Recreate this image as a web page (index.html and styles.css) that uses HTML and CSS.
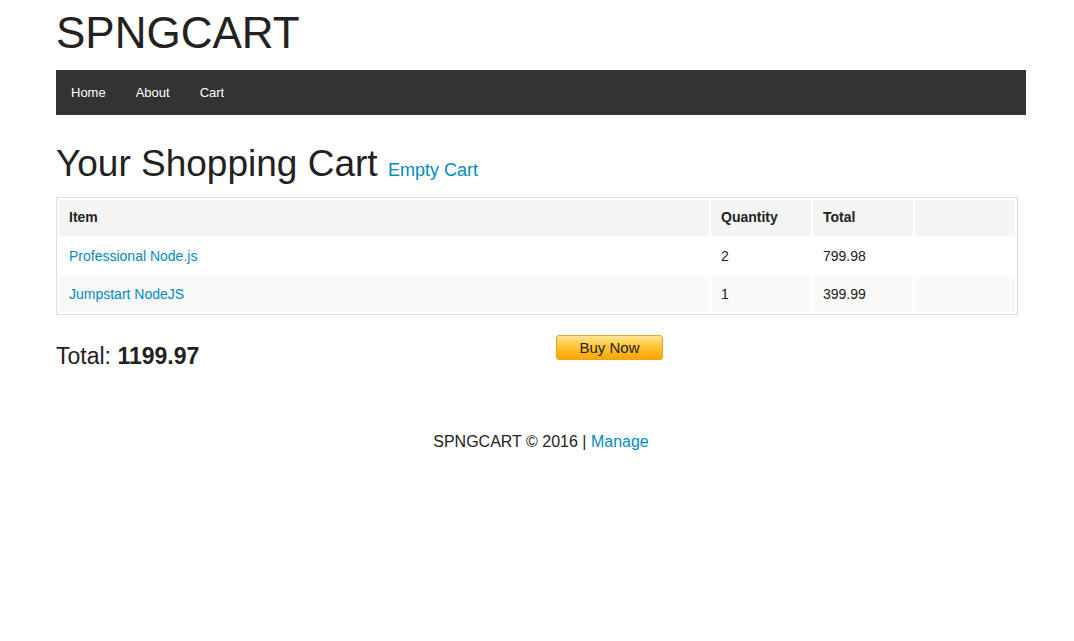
FILE: index.html
```html
<!DOCTYPE html>
<html>
<head>
<meta charset="utf-8">
<title>SPNGCART</title>
<link rel="stylesheet" href="styles.css">
</head>
<body>
<div class="container">
  <h1 class="brand">SPNGCART</h1>
  <nav class="topbar">
    <a href="#">Home</a>
    <a href="#">About</a>
    <a href="#">Cart</a>
  </nav>
  <h2 class="page-title">Your Shopping Cart <a class="empty" href="#">Empty Cart</a></h2>
  <table class="cart">
    <thead>
      <tr><th class="c-item">Item</th><th class="c-num">Quantity</th><th class="c-num">Total</th><th class="c-num"></th></tr>
    </thead>
    <tbody>
      <tr><td><a href="#">Professional Node.js</a></td><td>2</td><td>799.98</td><td></td></tr>
      <tr><td><a href="#">Jumpstart NodeJS</a></td><td>1</td><td>399.99</td><td></td></tr>
    </tbody>
  </table>
  <div class="summary">
    <h4 class="total">Total: <strong>1199.97</strong></h4>
    <div class="buy-col"><button class="buy">Buy Now</button></div>
  </div>
  <footer class="footer">SPNGCART © 2016 | <a href="#">Manage</a></footer>
</div>
</body>
</html>
```
FILE: styles.css
```css
* { box-sizing: border-box; }
html, body { margin: 0; padding: 0; background: #fff; }
body {
  font-family: "Liberation Sans", Arial, Helvetica, sans-serif;
  color: #222;
  font-size: 16px;
}
a { color: #008cba; text-decoration: none; }
.container { width: 970px; margin-left: 56px; }
.brand {
  font-size: 44px;
  font-weight: normal;
  line-height: 62px;
  margin: 2px 0 6px;
  color: #222;
}
.topbar {
  display: flex;
  height: 45px;
  background: #333;
  align-items: center;
}
.topbar a {
  color: #fff;
  font-size: 13px;
  padding: 0 15px;
  line-height: 45px;
}
.page-title {
  font-size: 37px;
  font-weight: normal;
  line-height: 52px;
  margin: 23px 0 1px;
}
.page-title .empty { font-size: 18px; }
.cart {
  border: 1px solid #ddd;
  border-spacing: 2px;
  width: 962px;
  background: #fff;
  margin-bottom: 20px;
}
.cart thead { background: #f5f5f5; }
.cart th {
  text-align: left;
  font-size: 14px;
  font-weight: bold;
  line-height: 18px;
  padding: 8px 10px 10px;
}
.cart td {
  font-size: 14px;
  line-height: 18px;
  padding: 9px 10px;
}
.cart tbody tr:nth-of-type(even) { background: #f9f9f9; }
.c-item { width: 650px; }
.c-num { width: 100px; }
.summary { display: flex; align-items: flex-start; }
.total {
  width: 500px;
  margin: 0;
  font-size: 23px;
  font-weight: normal;
  line-height: 32px;
  padding-top: 5px;
}
.total strong { font-weight: bold; }
.buy {
  width: 107px;
  height: 25px;
  border: 1px solid #eea22a;
  border-radius: 3px;
  background: linear-gradient(#ffe694, #ffc63a 45%, #ffa500);
  font-family: "Liberation Sans", Arial, sans-serif;
  font-size: 15px;
  color: #222;
  padding: 0;
  line-height: 22px;
}
.footer {
  text-align: center;
  margin-top: 60px;
  font-size: 16px;
  line-height: 20px;
}
```
